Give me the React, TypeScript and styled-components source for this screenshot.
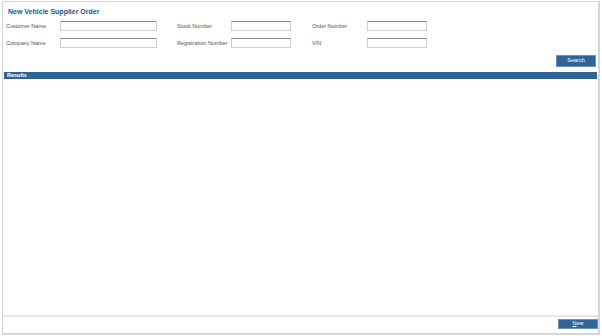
import React from "react";
import styled, { createGlobalStyle } from "styled-components";

const Global = createGlobalStyle`
  html, body { margin: 0; padding: 0; background: #ffffff; }
  body { font-family: "Liberation Sans", Arial, sans-serif; }
  * { box-sizing: border-box; }
`;

const Panel = styled.div`
  margin: 1px 2px 0 2px;
  height: 334px;
  border: 1px solid #d6d6d6;
  border-right-width: 2px;
  border-bottom-width: 2px;
  display: flex;
  flex-direction: column;
`;

const Title = styled.h1`
  margin: 0;
  padding: 5px 0 0 5px;
  font-size: 7px;
  line-height: 10px;
  font-weight: bold;
  color: #21558d;
`;

const Form = styled.div`
  margin-top: 4px;
  padding-left: 3px;
  display: flex;
  flex-direction: column;
  gap: 7px;
`;

const Row = styled.div`
  display: flex;
  align-items: center;
`;

const Field = styled.div<{ $gap?: number }>`
  display: flex;
  align-items: center;
  margin-right: ${(p) => p.$gap ?? 0}px;
`;

const Label = styled.label<{ $w: number }>`
  width: ${(p) => p.$w}px;
  font-size: 5.5px;
  line-height: 10px;
  color: #555555;
  white-space: nowrap;
`;

const Input = styled.input<{ $w: number }>`
  width: ${(p) => p.$w}px;
  height: 10px;
  margin: 0;
  padding: 0;
  border: 1px solid #cfcfcf;
  border-top-color: #8a8a8a;
  background: #ffffff;
  outline: none;
`;

const SearchRow = styled.div`
  margin-top: 7px;
  display: flex;
  justify-content: flex-end;
  padding-right: 2px;
`;

const Button = styled.button<{ $w: number; $h: number }>`
  width: ${(p) => p.$w}px;
  height: ${(p) => p.$h}px;
  margin: 0;
  padding: 0;
  background: #2f6399;
  border: 1px solid #6d90b8;
  color: #ffffff;
  font-family: "Liberation Sans", Arial, sans-serif;
  font-size: 5.5px;
  line-height: 1;
  cursor: pointer;
  u { text-decoration: underline; }
`;

const ResultsBar = styled.div`
  margin: 5px 1px 0 1px;
  height: 7px;
  background: #2f6496;
  color: #ffffff;
  font-size: 5.5px;
  font-weight: bold;
  line-height: 7px;
  padding-left: 3px;
`;

const ResultsArea = styled.div`
  flex: 1;
`;

const Footer = styled.div`
  border-top: 2px solid #e6e6e6;
  display: flex;
  justify-content: flex-end;
  padding: 2px 0 4px 0;
`;

export default function App() {
  return (
    <>
      <Global />
      <Panel>
        <Title>New Vehicle Supplier Order</Title>
        <Form>
          <Row>
            <Field $gap={20}>
              <Label $w={54}>Customer Name</Label>
              <Input $w={97} />
            </Field>
            <Field $gap={21}>
              <Label $w={54}>Stock Number</Label>
              <Input $w={60} />
            </Field>
            <Field>
              <Label $w={55}>Order Number</Label>
              <Input $w={60} />
            </Field>
          </Row>
          <Row>
            <Field $gap={20}>
              <Label $w={54}>Company Name</Label>
              <Input $w={97} />
            </Field>
            <Field $gap={21}>
              <Label $w={54}>Registration Number</Label>
              <Input $w={60} />
            </Field>
            <Field>
              <Label $w={55}>VIN</Label>
              <Input $w={60} />
            </Field>
          </Row>
        </Form>
        <SearchRow>
          <Button $w={40} $h={12}>Search</Button>
        </SearchRow>
        <ResultsBar>Results</ResultsBar>
        <ResultsArea />
        <Footer>
          <Button $w={40} $h={10}>
            <u>N</u>ew
          </Button>
        </Footer>
      </Panel>
    </>
  );
}
